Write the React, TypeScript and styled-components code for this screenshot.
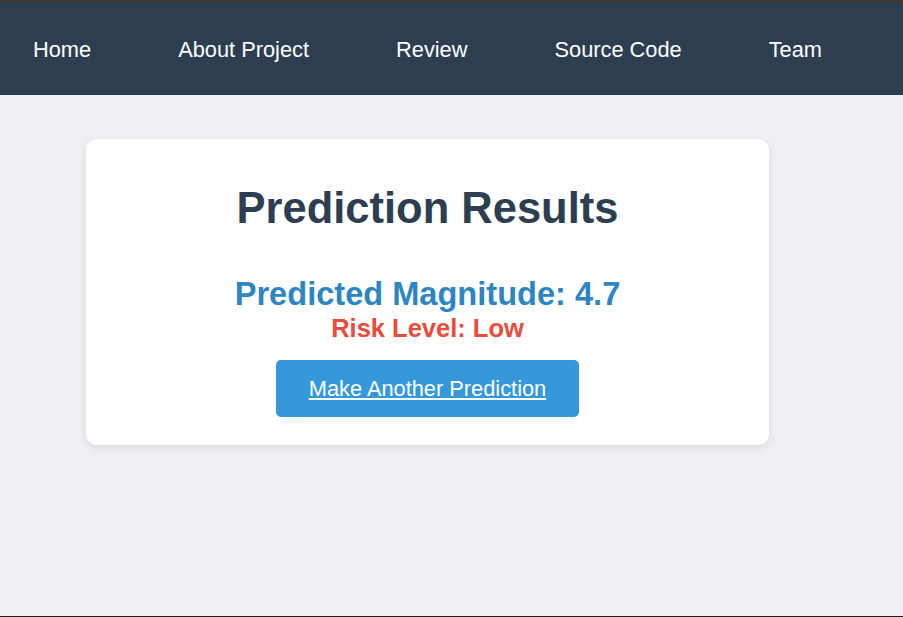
import React from "react";
import styled, { createGlobalStyle } from "styled-components";

const GlobalStyle = createGlobalStyle`
  html, body {
    margin: 0;
    padding: 0;
    background: #eff0f4;
  }
  * { box-sizing: border-box; }
`;

const Page = styled.div`
  min-height: 100vh;
  display: flex;
  flex-direction: column;
  background: #eff0f4;
  border-top: 3px solid #3a3a3a;
  border-bottom: 1px solid #1e1e1e;
  font-family: "Liberation Sans", Arial, sans-serif;
`;

const NavBar = styled.nav`
  height: 92px;
  background: #2c3e50;
  display: flex;
  align-items: center;
  padding-left: 33px;
  gap: 87px;
`;

const NavLink = styled.a`
  color: #ffffff;
  font-size: 21.8px;
  text-decoration: none;
  line-height: 25px;
  white-space: nowrap;
`;

const Main = styled.main`
  flex: 1;
  padding: 44px 0 0 86px;
`;

const Card = styled.section`
  width: 683px;
  background: #ffffff;
  border-radius: 11px;
  box-shadow: 0 3px 10px rgba(0, 0, 0, 0.09);
  padding: 44px 20px 28px;
  display: flex;
  flex-direction: column;
  align-items: center;
  text-align: center;
`;

const Title = styled.h1`
  margin: 0 0 41.5px;
  font-size: 43.5px;
  line-height: 50px;
  font-weight: 700;
  color: #2c3e50;
`;

const Magnitude = styled.h2`
  margin: 0;
  font-size: 32.6px;
  line-height: 38px;
  font-weight: 700;
  color: #2e86c1;
`;

const Risk = styled.h3<{ $tone: string }>`
  margin: 0 0 17px;
  font-size: 25.5px;
  line-height: 30px;
  font-weight: 700;
  color: ${(p) => p.$tone};
`;

const ActionButton = styled.a`
  display: inline-block;
  height: 57px;
  line-height: 57px;
  padding: 0 33px;
  background: #3498db;
  color: #ffffff;
  font-size: 21.8px;
  border-radius: 5px;
  text-decoration: underline;
  text-underline-offset: 2px;
  white-space: nowrap;
`;

const links = ["Home", "About Project", "Review", "Source Code", "Team"];

export default function App() {
  return (
    <>
      <GlobalStyle />
      <Page>
        <NavBar>
          {links.map((l) => (
            <NavLink key={l} href="#">
              {l}
            </NavLink>
          ))}
        </NavBar>
        <Main>
          <Card>
            <Title>Prediction Results</Title>
            <Magnitude>Predicted Magnitude: 4.7</Magnitude>
            <Risk $tone="#e74c3c">Risk Level: Low</Risk>
            <ActionButton href="#">Make Another Prediction</ActionButton>
          </Card>
        </Main>
      </Page>
    </>
  );
}
